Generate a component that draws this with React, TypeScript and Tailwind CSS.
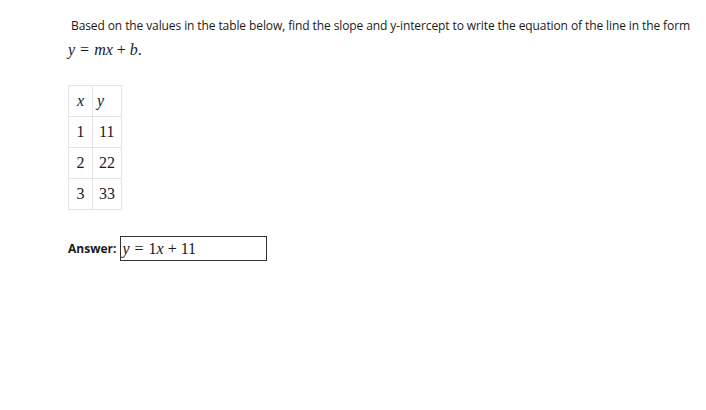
// Slope / intercept question with a small values table and an answer box.

const rows = [
  { x: "1", y: "11" },
  { x: "2", y: "22" },
  { x: "3", y: "33" },
];

function V({ children }: { children: string }) {
  return <i className="italic">{children}</i>;
}

export default function App() {
  return (
    <div className="w-[706px] h-[410px] bg-white text-[#1a1a1a] font-['Open_Sans',sans-serif]">
      <div className="pl-[68px] pt-[17px]">
        <p className="text-[12px] leading-[18px] pl-[3px] whitespace-nowrap tracking-[-0.1px]">
          Based on the values in the table below, find the slope and y-intercept to write the equation of the line in the form
        </p>
        <p className="font-['Liberation_Serif',serif] text-[16px] leading-[20px] mt-[5px] flex items-baseline">
          <V>y</V>
          <span className="mx-[5px]">=</span>
          <V>mx</V>
          <span className="mx-[4px]">+</span>
          <V>b</V>
          <span>.</span>
        </p>

        <table className="mt-[25px] border-collapse font-['Liberation_Serif',serif] text-[16px]">
          <tbody>
            <tr className="h-[31px]">
              <td className="border border-[#e4e4e4] w-[24px] text-center">
                <V>x</V>
              </td>
              <td className="border border-[#e4e4e4] w-[29px] pl-[4px]">
                <V>y</V>
              </td>
            </tr>
            {rows.map((r) => (
              <tr key={r.x} className="h-[31px]">
                <td className="border border-[#e4e4e4] text-center">{r.x}</td>
                <td className="border border-[#e4e4e4] pl-[6px]">{r.y}</td>
              </tr>
            ))}
          </tbody>
        </table>

        <div className="mt-[26px] flex items-center">
          <span className="text-[12px] font-bold mr-[4px]">Answer:</span>
          <div className="w-[147px] h-[25px] border border-[#333] flex items-center pl-[1px] font-['Liberation_Serif',serif] text-[16px]">
            <V>y</V>
            <span className="mx-[5px]">=</span>
            <span>1</span>
            <V>x</V>
            <span className="mx-[4px]">+</span>
            <span>11</span>
          </div>
        </div>
      </div>
    </div>
  );
}
